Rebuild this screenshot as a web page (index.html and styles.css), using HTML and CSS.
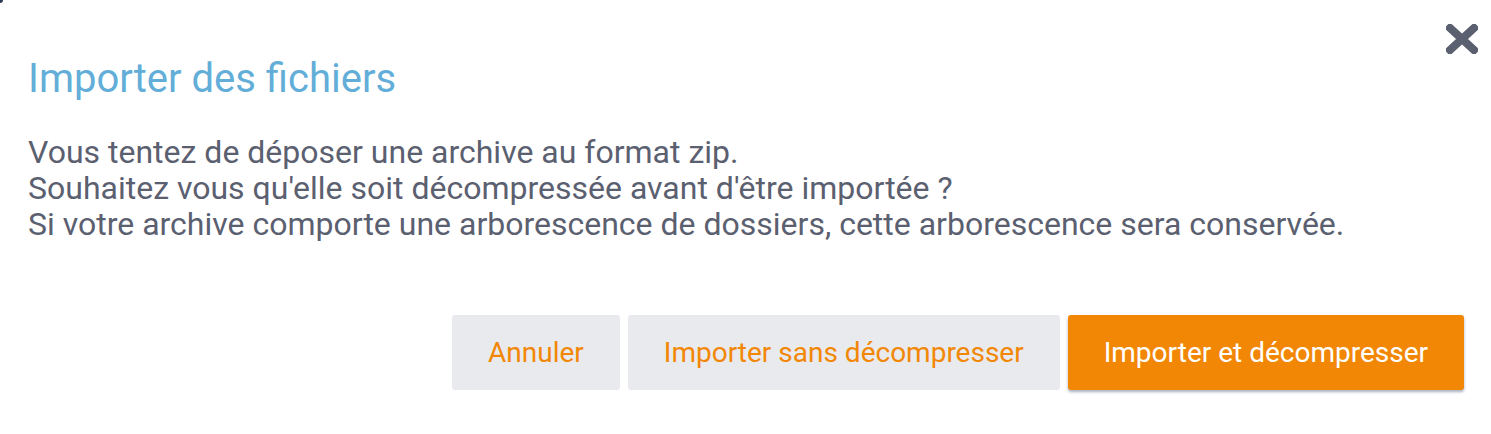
FILE: index.html
```html
<!DOCTYPE html>
<html lang="fr">
<head>
<meta charset="utf-8">
<link rel="stylesheet" href="styles.css">
</head>
<body>
<span class="corner"></span>
<div class="dialog">
  <button class="close" aria-label="Fermer">
    <svg width="32" height="30" viewBox="0 0 32 30"><path d="M4 4 L28 26 M28 4 L4 26" stroke="#5b6070" stroke-width="8" stroke-linecap="square" fill="none"/></svg>
  </button>
  <h1 class="title">Importer des fichiers</h1>
  <div class="body">
    <p>Vous tentez de déposer une archive au format zip.</p>
    <p>Souhaitez vous qu'elle soit décompressée avant d'être importée ?</p>
    <p>Si votre archive comporte une arborescence de dossiers, cette arborescence sera conservée.</p>
  </div>
  <div class="actions">
    <button class="btn btn-secondary">Annuler</button>
    <button class="btn btn-secondary">Importer sans décompresser</button>
    <button class="btn btn-primary">Importer et décompresser</button>
  </div>
</div>
</body>
</html>
```
FILE: styles.css
```css
html, body {
  margin: 0;
  padding: 0;
  background: #ffffff;
}
body {
  font-family: Roboto, "Liberation Sans", sans-serif;
  position: relative;
  width: 1491px;
  height: 434px;
  overflow: hidden;
}
.corner {
  position: absolute;
  left: 0;
  top: 0;
  width: 3px;
  height: 3px;
  background: #2b3b55;
  border-bottom-right-radius: 3px;
}
.dialog {
  position: relative;
  padding: 55px 27px 0 28px;
}
.close {
  position: absolute;
  top: 24px;
  right: 13px;
  border: 0;
  background: none;
  padding: 0;
  width: 32px;
  height: 30px;
  cursor: pointer;
}
.close svg { display: block; }
.title {
  margin: 0;
  font-size: 40px;
  font-weight: 400;
  line-height: 48px;
  color: #62aed8;
}
.body {
  margin-top: 31px;
  font-size: 32px;
  line-height: 36px;
  color: #5b6070;
}
.body p { margin: 0; }
.actions {
  display: flex;
  justify-content: flex-end;
  gap: 8px;
  margin-top: 73px;
}
.btn {
  font-family: Roboto, "Liberation Sans", sans-serif;
  font-size: 28px;
  height: 75px;
  padding: 0 36px;
  border: 0;
  border-radius: 3px;
  cursor: pointer;
}
.btn-secondary {
  background: #e9eaee;
  color: #f28705;
}
.btn-primary {
  background: #f28705;
  color: #ffffff;
  box-shadow: 0 2px 3px rgba(60, 80, 110, 0.45);
}
```
